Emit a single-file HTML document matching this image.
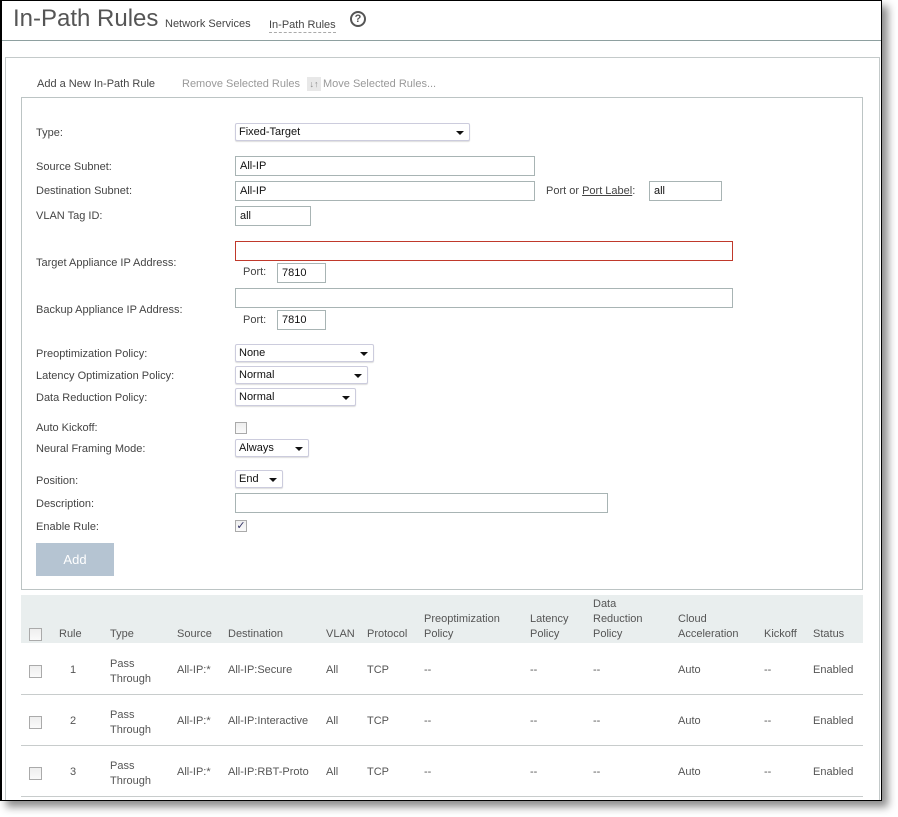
<!DOCTYPE html>
<html><head><meta charset="utf-8"><style>
*{box-sizing:border-box;margin:0;padding:0}
body{width:898px;height:817px;background:#fff;position:relative;overflow:hidden;font-family:"Liberation Sans",sans-serif;font-size:11px;color:#444}
.a{position:absolute;white-space:nowrap}
#win{position:absolute;left:0;top:0;width:882px;height:801px;border:1px solid #000;border-left:2px solid #000;background:#fff;box-shadow:6px 6px 8px rgba(0,0,0,.45)}
.inp{position:absolute;height:20px;border:1px solid #a8b4b4;background:#fff;padding:3px 4px 0;font-size:11px;color:#111}
.sel{position:absolute;height:18px;border:1px solid #ccd;border-radius:2px;background:#fff;padding:2px 3px 0;font-size:11px;color:#111;box-shadow:0 1px 1px #ddd}
.sel:after{content:"";position:absolute;right:5px;top:7px;border-left:4px solid transparent;border-right:4px solid transparent;border-top:4px solid #111}
.cb{position:absolute;width:12px;height:12px;border:1px solid #aaa;background:linear-gradient(#eee,#fafafa)}
.lbl{position:absolute;white-space:nowrap;color:#444}
.h{position:absolute;white-space:nowrap;color:#555;line-height:15px}
.c{position:absolute;white-space:nowrap;color:#555}
.line{position:absolute;left:21px;width:842px;height:1px;background:#c8cccc}
</style></head><body>
<div id="win"></div>
<div class="a" style="left:13px;top:5px;font-size:24px;color:#555">In-Path Rules</div>
<div class="a" style="left:165px;top:18px;color:#444">Network Services</div>
<div class="a" style="left:269px;top:18px;color:#444;border-bottom:1px dashed #aaa;line-height:14px">In-Path Rules</div>
<div class="a" style="left:350px;top:11px;width:16px;height:16px;border:2px solid #555;border-radius:50%;font-size:11px;font-weight:bold;text-align:center;line-height:12px;color:#555">?</div>
<div class="a" style="left:2px;top:40px;width:879px;height:1px;background:#8ea0a0"></div>
<div class="a" style="left:5px;top:57px;width:875px;height:743px;border:1px solid #c4caca;border-bottom:none"></div>
<div class="a" style="left:37px;top:78px;color:#444">Add a New In-Path Rule</div>
<div class="a" style="left:182px;top:78px;color:#999">Remove Selected Rules</div>
<div class="a" style="left:307px;top:77px;width:14px;height:14px;background:#e8e8e8;color:#888;font-size:9px;text-align:center;line-height:14px">↓↑</div>
<div class="a" style="left:323px;top:78px;color:#999">Move Selected Rules...</div>
<div class="a" style="left:21px;top:97px;width:842px;height:493px;border:1px solid #bcc4c4"></div>

<div class="lbl" style="left:36px;top:127px">Type:</div>
<div class="sel" style="left:235px;top:123px;width:235px">Fixed-Target</div>
<div class="lbl" style="left:36px;top:161px">Source Subnet:</div>
<div class="inp" style="left:235px;top:156px;width:300px">All-IP</div>
<div class="lbl" style="left:36px;top:185px">Destination Subnet:</div>
<div class="inp" style="left:235px;top:181px;width:300px">All-IP</div>
<div class="lbl" style="left:546px;top:185px">Port or <span style="text-decoration:underline">Port Label</span>:</div>
<div class="inp" style="left:649px;top:181px;width:73px">all</div>
<div class="lbl" style="left:36px;top:210px">VLAN Tag ID:</div>
<div class="inp" style="left:235px;top:206px;width:76px">all</div>
<div class="lbl" style="left:36px;top:257px">Target Appliance IP Address:</div>
<div class="inp" style="left:235px;top:241px;width:498px;border-color:#c0392b"></div>
<div class="lbl" style="left:243px;top:266px">Port:</div>
<div class="inp" style="left:277px;top:263px;width:49px">7810</div>
<div class="lbl" style="left:36px;top:304px">Backup Appliance IP Address:</div>
<div class="inp" style="left:235px;top:288px;width:498px"></div>
<div class="lbl" style="left:243px;top:314px">Port:</div>
<div class="inp" style="left:277px;top:310px;width:49px">7810</div>

<div class="lbl" style="left:36px;top:348px">Preoptimization Policy:</div>
<div class="sel" style="left:235px;top:344px;width:139px">None</div>
<div class="lbl" style="left:36px;top:370px">Latency Optimization Policy:</div>
<div class="sel" style="left:235px;top:366px;width:133px">Normal</div>
<div class="lbl" style="left:36px;top:392px">Data Reduction Policy:</div>
<div class="sel" style="left:235px;top:388px;width:121px">Normal</div>
<div class="lbl" style="left:36px;top:422px">Auto Kickoff:</div>
<div class="cb" style="left:235px;top:422px"></div>
<div class="lbl" style="left:36px;top:443px">Neural Framing Mode:</div>
<div class="sel" style="left:235px;top:439px;width:74px">Always</div>
<div class="lbl" style="left:36px;top:475px">Position:</div>
<div class="sel" style="left:235px;top:470px;width:48px">End</div>
<div class="lbl" style="left:36px;top:498px">Description:</div>
<div class="inp" style="left:235px;top:493px;width:373px"></div>
<div class="lbl" style="left:36px;top:521px">Enable Rule:</div>
<div class="cb" style="left:235px;top:520px;color:#336;font-size:11px;line-height:10px;text-align:center">✓</div>
<div class="a" style="left:36px;top:543px;width:78px;height:33px;background:#b5c4d2;color:#fff;font-size:13px;text-align:center;line-height:33px">Add</div>

<div class="a" style="left:21px;top:595px;width:842px;height:48px;background:#e9eeee"></div>
<div class="cb" style="left:29px;top:628px;width:13px;height:13px"></div>
<div class="h" style="left:59px;top:627px">Rule</div>
<div class="h" style="left:110px;top:627px">Type</div>
<div class="h" style="left:177px;top:627px">Source</div>
<div class="h" style="left:228px;top:627px">Destination</div>
<div class="h" style="left:326px;top:627px">VLAN</div>
<div class="h" style="left:367px;top:627px">Protocol</div>
<div class="h" style="left:424px;top:612px">Preoptimization<br>Policy</div>
<div class="h" style="left:530px;top:612px">Latency<br>Policy</div>
<div class="h" style="left:593px;top:597px">Data<br>Reduction<br>Policy</div>
<div class="h" style="left:678px;top:612px">Cloud<br>Acceleration</div>
<div class="h" style="left:764px;top:627px">Kickoff</div>
<div class="h" style="left:813px;top:627px">Status</div>

<div class="line" style="top:694px"></div>
<div class="line" style="top:745px"></div>
<div class="line" style="top:796px"></div>
<div id="rows"></div>
<script>
var d=[["1","All-IP:Secure",643],["2","All-IP:Interactive",694],["3","All-IP:RBT-Proto",745]];
var h="";
d.forEach(function(r){var y=r[2]+21;
h+='<div class="cb" style="left:29px;top:'+(y+1)+'px;width:13px;height:13px"></div>'+
'<div class="c" style="left:70px;top:'+y+'px">'+r[0]+'</div>'+
'<div class="c" style="left:110px;top:'+(y-7)+'px;line-height:15px">Pass<br>Through</div>'+
'<div class="c" style="left:177px;top:'+y+'px">All-IP:*</div>'+
'<div class="c" style="left:228px;top:'+y+'px">'+r[1]+'</div>'+
'<div class="c" style="left:326px;top:'+y+'px">All</div>'+
'<div class="c" style="left:367px;top:'+y+'px">TCP</div>'+
'<div class="c" style="left:424px;top:'+y+'px">--</div>'+
'<div class="c" style="left:530px;top:'+y+'px">--</div>'+
'<div class="c" style="left:593px;top:'+y+'px">--</div>'+
'<div class="c" style="left:678px;top:'+y+'px">Auto</div>'+
'<div class="c" style="left:764px;top:'+y+'px">--</div>'+
'<div class="c" style="left:813px;top:'+y+'px">Enabled</div>';});
document.getElementById('rows').innerHTML=h;
</script>
</body></html>
